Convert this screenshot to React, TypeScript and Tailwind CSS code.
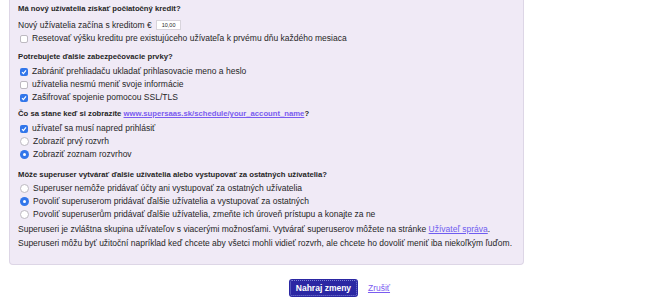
import React from "react";

const font = { fontFamily: '"Liberation Sans", Arial, sans-serif' };

function Check({ checked }: { checked?: boolean }) {
  return checked ? (
    <span className="inline-flex items-center justify-center w-[8px] h-[8px] rounded-[2px] bg-[#3276ea] shrink-0">
      <svg width="6" height="6" viewBox="0 0 6 6">
        <path d="M1 3.2 L2.4 4.6 L5 1.4" stroke="white" strokeWidth="1.2" fill="none" />
      </svg>
    </span>
  ) : (
    <span className="inline-block w-[8px] h-[8px] rounded-[2px] bg-white border border-[#bdb9c1] shrink-0" />
  );
}

function Radio({ checked }: { checked?: boolean }) {
  return checked ? (
    <span className="inline-flex items-center justify-center w-[9px] h-[9px] rounded-full bg-[#3276ea] shrink-0">
      <span className="w-[3px] h-[3px] rounded-full bg-white" />
    </span>
  ) : (
    <span className="inline-block w-[9px] h-[9px] rounded-full bg-white border border-[#bdb9c1] shrink-0" />
  );
}

function Opt({ kind, checked, children }: { kind: "c" | "r"; checked?: boolean; children: React.ReactNode }) {
  return (
    <div className="flex items-center h-[13px] gap-[4px] pl-[2px]">
      {kind === "c" ? <Check checked={checked} /> : <Radio checked={checked} />}
      <span>{children}</span>
    </div>
  );
}

function H({ children }: { children: React.ReactNode }) {
  return <div className="font-bold text-[7.7px] h-[14px] leading-[14px]">{children}</div>;
}

export default function App() {
  return (
    <div className="w-[671px] h-[306px] bg-white text-[#262626] text-[8.5px] overflow-hidden" style={font}>
      <div className="ml-[9px] w-[515px] bg-[#f0eaf6] border border-t-0 border-[#ddd6e6] rounded-b-[4px] pl-[8px] pt-[2px] pb-[14px]">
        <H>Má nový užívatelia získať počiatočný kredit?</H>
        <div className="flex items-center h-[14px] mt-[2px]">
          <span>Nový užívatelia začína s kreditom €</span>
          <span className="ml-[4px] w-[25px] h-[10px] bg-white border border-[#d8d4dc] text-[5.5px] leading-[8px] pl-[5px]">10,00</span>
        </div>
        <Opt kind="c">Resetovať výšku kreditu pre existujúceho užívateľa k prvému dňu každého mesiaca</Opt>

        <div className="mt-[5px]">
          <H>Potrebujete ďalšie zabezpečovacie prvky?</H>
          <div className="mt-[1px]">
            <Opt kind="c" checked>Zabrániť prehliadaču ukladať prihlasovacie meno a heslo</Opt>
            <Opt kind="c">užívatelia nesmú meniť svoje informácie</Opt>
            <Opt kind="c" checked>Zašifrovať spojenie pomocou SSL/TLS</Opt>
          </div>
        </div>

        <div className="mt-[3px]">
          <H>
            Čo sa stane keď si zobrazíte{" "}
            <a href="#" className="text-[#7a5cf0] underline">www.supersaas.sk/schedule/your_account_name</a>?
          </H>
          <div className="mt-[1px]">
            <Opt kind="c" checked>užívateľ sa musí napred prihlásiť</Opt>
            <Opt kind="r">Zobraziť prvý rozvrh</Opt>
            <Opt kind="r" checked>Zobraziť zoznam rozvrhov</Opt>
          </div>
        </div>

        <div className="mt-[7px]">
          <H>Môže superuser vytvárať ďalšie užívatelia alebo vystupovať za ostatných užívatelia?</H>
          <div>
            <Opt kind="r">Superuser nemôže pridávať účty ani vystupovať za ostatných užívatelia</Opt>
            <Opt kind="r" checked>Povoliť superuserom pridávať ďalšie užívatelia a vystupovať za ostatných</Opt>
            <Opt kind="r">Povoliť superuserům pridávať ďalšie užívatelia, zmeňte ich úroveň prístupu a konajte za ne</Opt>
          </div>
        </div>

        <div className="mt-[1px] leading-[14px]">
          <div>
            Superuseri je zvláštna skupina užívateľov s viacerými možnosťami. Vytvárať superuserov môžete na stránke{" "}
            <a href="#" className="text-[#6f5cf0] underline">Užívateľ správa</a>.
          </div>
          <div>Superuseri môžu byť užitoční napríklad keď chcete aby všetci mohli vidieť rozvrh, ale chcete ho dovoliť meniť iba niekoľkým ľuďom.</div>
        </div>
      </div>

      <div className="flex items-center justify-center gap-[10px] mt-[14px] pl-[8px]">
        <button className="h-[18px] w-[69px] bg-[#2b27a3] text-white font-bold text-[8.5px] rounded-[3px] outline outline-1 outline-dotted outline-[#7f83d6] -outline-offset-2">
          Nahraj zmeny
        </button>
        <a href="#" className="text-[#7a5cf0] underline">Zrušiť</a>
      </div>
    </div>
  );
}
